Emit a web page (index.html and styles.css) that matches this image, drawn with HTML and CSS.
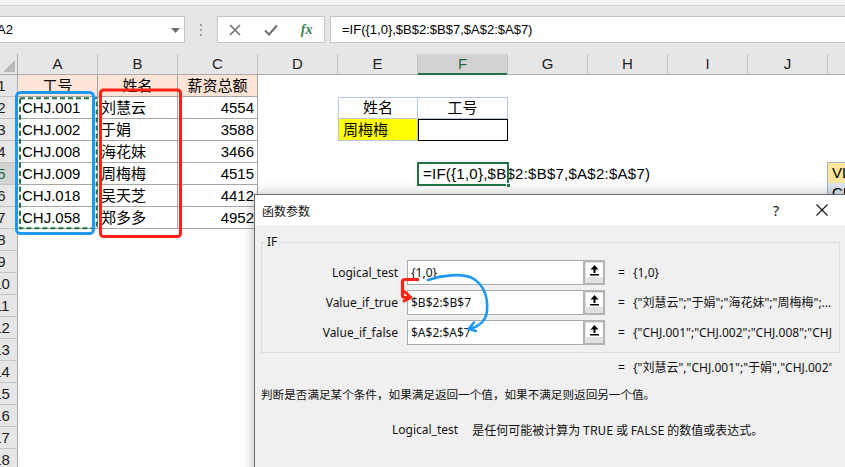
FILE: index.html
```html
<!DOCTYPE html>
<html lang="zh-CN">
<head>
<meta charset="utf-8">
<title>Excel IF</title>
<link rel="stylesheet" href="styles.css">
</head>
<body>
<div class="ribbon-edge"></div>
<div class="fbar">
  <div class="namebox"><span class="ref">A2</span><svg class="caret" width="9" height="5" viewBox="0 0 9 5"><path d="M0 0H9L4.5 5Z" fill="#707070"/></svg></div>
  <div class="grip"><i></i><i></i><i></i></div>
  <div class="fbtns">
    <span class="fb fb1"><svg width="12" height="12" viewBox="0 0 12 12"><path d="M1 1L11 11M11 1L1 11" stroke="#707070" stroke-width="1.6"/></svg></span>
    <span class="fb fb2"><svg width="14" height="12" viewBox="0 0 14 12"><path d="M1 6.5L5 10.5L13 1.5" stroke="#707070" stroke-width="2" fill="none"/></svg></span>
    <span class="fb fb3">fx</span>
  </div>
  <div class="finput">=IF({1,0},$B$2:$B$7,$A$2:$A$7)</div>
</div>

<div class="colheads">
  <div class="corner"><svg width="17" height="20" viewBox="0 0 17 20"><path d="M3 18H15V6Z" fill="#b9b9b9"/></svg></div>
  <div class="ch">A</div>
  <div class="ch">B</div>
  <div class="ch">C</div>
  <div class="ch">D</div>
  <div class="ch">E</div>
  <div class="ch w90 sel">F</div>
  <div class="ch">G</div>
  <div class="ch">H</div>
  <div class="ch">I</div>
  <div class="ch">J</div>
  <div class="ch rest"></div>
</div>

<div class="sheetbody">
  <div class="rowheads">
    <div class="rh"><span>1</span></div>
    <div class="rh"><span>2</span></div>
    <div class="rh"><span>3</span></div>
    <div class="rh"><span>4</span></div>
    <div class="rh sel"><span>5</span></div>
    <div class="rh"><span>6</span></div>
    <div class="rh"><span>7</span></div>
    <div class="rh"><span>8</span></div>
    <div class="rh"><span>9</span></div>
    <div class="rh"><span>10</span></div>
    <div class="rh"><span>11</span></div>
    <div class="rh"><span>12</span></div>
    <div class="rh"><span>13</span></div>
    <div class="rh"><span>14</span></div>
    <div class="rh"><span>15</span></div>
    <div class="rh"><span>16</span></div>
    <div class="rh"><span>17</span></div>
    <div class="rh"><span>18</span></div>
  </div>
  <div class="cells">
    <div class="row">
      <div class="c t hd">工号</div><div class="c t hd">姓名</div><div class="c t hd">薪资总额</div>
    </div>
    <div class="row">
      <div class="c t">CHJ.001</div><div class="c t cj">刘慧云</div><div class="c t num">4554</div>
      <div class="c"></div><div class="c lb lb-e2">姓名</div><div class="c w90 lb lb-f2">工号</div>
    </div>
    <div class="row">
      <div class="c t">CHJ.002</div><div class="c t cj">于娟</div><div class="c t num">3588</div>
      <div class="c"></div><div class="c lb-e3">周梅梅</div><div class="c w90 blk"></div>
    </div>
    <div class="row">
      <div class="c t">CHJ.008</div><div class="c t cj">海花妹</div><div class="c t num">3466</div>
    </div>
    <div class="row">
      <div class="c t">CHJ.009</div><div class="c t cj">周梅梅</div><div class="c t num">4515</div>
      <div class="c"></div><div class="c"></div>
      <div class="c w90 active">=IF({1,0},$B$2:$B$7,$A$2:$A$7)<i class="handle"></i></div>
    </div>
    <div class="row">
      <div class="c t">CHJ.018</div><div class="c t cj">吴天芝</div><div class="c t num">4412</div>
    </div>
    <div class="row">
      <div class="c t">CHJ.058</div><div class="c t cj">郑多多</div><div class="c t num">4952</div>
    </div>
  </div>
</div>

<div class="ac">
  <div class="ac-on">VLOOKUP</div>
  <div class="ac-next">CHOOSE</div>
</div>

<div class="dlg">
  <div class="dlg-title">
    <span class="dlg-name">函数参数</span>
    <span class="tb tb-help">?</span>
    <span class="tb tb-close"><svg width="12" height="12" viewBox="0 0 12 12"><path d="M0.5 0.5L11.5 11.5M11.5 0.5L0.5 11.5" stroke="#111" stroke-width="1.1"/></svg></span>
  </div>
  <div class="dlg-body">
    <fieldset class="grp">
      <legend>IF</legend>
      <div class="prow">
        <span class="plabel">Logical_test</span>
        <span class="pinput">{1,0}</span>
        <span class="pbtn"><svg width="17" height="14" viewBox="0 0 17 14"><rect width="17" height="14" fill="#fff"/><path d="M8.5 2L4.5 6.5H7.5V10H9.5V6.5H12.5Z" fill="#000"/><rect x="4" y="11" width="9" height="1.5" fill="#000"/></svg></span>
        <span class="peq">=</span>
        <span class="pval">{1,0}</span>
      </div>
      <div class="prow">
        <span class="plabel">Value_if_true</span>
        <span class="pinput">$B$2:$B$7</span>
        <span class="pbtn"><svg width="17" height="14" viewBox="0 0 17 14"><rect width="17" height="14" fill="#fff"/><path d="M8.5 2L4.5 6.5H7.5V10H9.5V6.5H12.5Z" fill="#000"/><rect x="4" y="11" width="9" height="1.5" fill="#000"/></svg></span>
        <span class="peq">=</span>
        <span class="pval">{"刘慧云";"于娟";"海花妹";"周梅梅";...</span>
      </div>
      <div class="prow">
        <span class="plabel">Value_if_false</span>
        <span class="pinput">$A$2:$A$7</span>
        <span class="pbtn"><svg width="17" height="14" viewBox="0 0 17 14"><rect width="17" height="14" fill="#fff"/><path d="M8.5 2L4.5 6.5H7.5V10H9.5V6.5H12.5Z" fill="#000"/><rect x="4" y="11" width="9" height="1.5" fill="#000"/></svg></span>
        <span class="peq">=</span>
        <span class="pval">{"CHJ.001";"CHJ.002";"CHJ.008";"CHJ.009";"CHJ.018";"CHJ.058"}</span>
      </div>
    </fieldset>
    <div class="res"><span class="peq">=</span><span class="pval">{"刘慧云","CHJ.001";"于娟","CHJ.002";"海花妹","CHJ.008"}</span></div>
    <div class="desc">判断是否满足某个条件，如果满足返回一个值，如果不满足则返回另一个值。</div>
    <div class="hint"><span class="hint-name">Logical_test</span><span>是任何可能被计算为 TRUE 或 FALSE 的数值或表达式。</span></div>
  </div>
</div>

<svg class="marks" width="845" height="467" viewBox="0 0 845 467">
  <rect x="20" y="98.3" width="76.7" height="130" fill="none" stroke="#217346" stroke-width="2" stroke-dasharray="5 3"/>
  <rect x="16.5" y="92.5" width="77" height="141" rx="4" fill="none" stroke="#1e98f2" stroke-width="3"/>
  <rect x="100.5" y="90" width="80" height="146.5" rx="3" fill="none" stroke="#ff2316" stroke-width="3"/>
  <path d="M419 279.5H405Q402.5 279.5 402.5 282V295.5Q402.5 297.5 405 297.5H410" fill="none" stroke="#ff2316" stroke-width="3.2" stroke-linejoin="round"/>
  <path d="M404.5 291.5L411 297.5L404 301" fill="none" stroke="#ff2316" stroke-width="3" stroke-linejoin="round" stroke-linecap="round"/>
  <path d="M428 280C440 276 462 272 474 279C484 286 488 298 487 311C486 321 480 326 469 329" fill="none" stroke="#1e98f2" stroke-width="2.6" stroke-linecap="round"/>
  <path d="M474 322.5L468.5 329L476 331" fill="none" stroke="#1e98f2" stroke-width="2.6" stroke-linecap="round" stroke-linejoin="round"/>
</svg>
</body>
</html>
```
FILE: styles.css
```css
* { box-sizing: border-box; }
html, body { margin: 0; padding: 0; }
body {
  width: 845px;
  height: 467px;
  overflow: hidden;
  position: relative;
  background: #fff;
  color: #000;
  font-family: "Liberation Sans", "Noto Sans CJK SC", sans-serif;
}

/* ribbon bottom edge */
.ribbon-edge {
  height: 6px;
  background: #f3f3f3;
  border-bottom: 1px solid #d4d4d4;
}

/* formula bar */
.fbar {
  height: 48px;
  background: #e6e6e6;
  display: flex;
  align-items: flex-start;
  padding-top: 10px;
}
.namebox {
  width: 185px;
  height: 27px;
  flex: none;
  background: #fff;
  border: 1px solid #c6c6c6;
  border-left: none;
  display: flex;
  align-items: center;
  justify-content: space-between;
  padding-right: 4px;
  font-size: 13px;
}
.namebox .ref { margin-left: -3px; }
.caret { margin-top: 1px; }
.grip {
  width: 32px;
  height: 27px;
  flex: none;
  display: flex;
  flex-direction: column;
  align-items: center;
  justify-content: center;
  gap: 3px;
}
.grip i { display: block; width: 2px; height: 2px; background: #9e9e9e; }
.fbtns {
  width: 108px;
  height: 27px;
  flex: none;
  background: #fff;
  border: 1px solid #c6c6c6;
  display: flex;
  align-items: center;
}
.fb { display: flex; justify-content: center; align-items: center; height: 25px; }
.fb1 { width: 35px; }
.fb2 { width: 37px; }
.fb3 {
  width: 35px;
  font-family: "Liberation Serif", serif;
  font-style: italic;
  font-weight: bold;
  font-size: 14px;
  color: #3d7f55;
}
.finput {
  flex: 1;
  height: 27px;
  margin-left: 5px;
  background: #fff;
  border: 1px solid #c6c6c6;
  border-right: none;
  padding-left: 11px;
  font-size: 13px;
  line-height: 25px;
  white-space: nowrap;
}

/* column headers */
.colheads {
  display: flex;
  height: 21px;
  background: #e6e6e6;
  border-bottom: 1px solid #ababab;
}
.corner {
  width: 18px;
  flex: none;
  border-right: 1px solid #ababab;
}
.corner svg { display: block; }
.ch {
  width: 80px;
  flex: none;
  border-right: 1px solid #c4c4c4;
  text-align: center;
  font-size: 15px;
  line-height: 20px;
  color: #222;
}
.ch.w90 { width: 90px; }
.ch.sel {
  background: #d2d2d2;
  color: #1e6b41;
  box-shadow: inset 0 -2px 0 #217346;
  height: 21px;
}
.ch.rest { flex: 1; border-right: none; }

/* body */
.sheetbody { display: flex; }
.rowheads {
  width: 18px;
  flex: none;
  display: flex;
  flex-direction: column;
  background: #e6e6e6;
}
.rh {
  height: 22px;
  border-right: 1px solid #ababab;
  border-bottom: 1px solid #c4c4c4;
  overflow: hidden;
  display: flex;
  font-size: 15px;
  line-height: 21px;
  color: #222;
}
.rh span {
  flex: none;
  width: 33px;
  margin-left: -15px;
  text-align: center;
}
.rh.sel {
  background: #d2d2d2;
  color: #1e6b41;
  box-shadow: inset -2px 0 0 #217346;
}

.cells { flex: 1; }
.row { display: flex; height: 22px; }
.c {
  width: 80px;
  height: 22px;
  flex: none;
  padding: 0 4px;
  font-size: 15px;
  line-height: 22px;
  white-space: nowrap;
}
.c.w90 { width: 90px; }
.c.t {
  border-right: 1px solid #a6a6a6;
  border-bottom: 1px solid #a6a6a6;
  line-height: 21px;
}
.c.cj { padding-left: 3px; }
.hd { background: #fce4d6; text-align: center; }
.num { text-align: right; padding-right: 3px; }

.lb { text-align: center; border: 1px solid #b4c6e7; line-height: 20px; }
.lb-f2 { border-left: none; }
.lb-e3 {
  background: #ffff00;
  border: 1px solid #b4c6e7;
  border-top: none;
  line-height: 21px;
}
.blk { border: 1px solid #000; height: 22px; }

.active {
  position: relative;
  z-index: 1;
  padding-left: 5px;
  letter-spacing: 0.25px;
  outline: 2px solid #217346;
  outline-offset: -1px;
}
.handle {
  position: absolute;
  right: -3px;
  bottom: -3px;
  width: 5px;
  height: 5px;
  background: #217346;
  border: 1px solid #fff;
}

/* autocomplete list */
.ac {
  position: absolute;
  left: 827px;
  top: 162px;
  width: 130px;
  border: 1px solid #a3b3cf;
  background: #fff;
  z-index: 2;
}
.ac div {
  height: 20px;
  line-height: 20px;
  padding-left: 4px;
  font-size: 15px;
  white-space: nowrap;
}
.ac-on { background: #fde59b; }
.ac-next { background: #dde6f1; }

/* dialog */
.dlg {
  position: absolute;
  left: 254px;
  top: 194px;
  width: 593px;
  height: 290px;
  background: #f0f0f0;
  border: 1px solid #6e6e6e;
  box-shadow: 0 0 12px rgba(0, 0, 0, 0.28);
  z-index: 3;
  font-family: "Noto Sans", "Noto Sans CJK SC", sans-serif;
  font-size: 12px;
  color: #111;
}
.dlg-title {
  height: 30px;
  background: #fff;
  display: flex;
  align-items: center;
  padding-left: 7px;
  font-family: "Noto Sans CJK SC", sans-serif;
}
.dlg-name { flex: 1; }
.tb {
  width: 46px;
  height: 30px;
  display: flex;
  justify-content: center;
  align-items: center;
}
.tb-help { font-family: "Noto Sans", sans-serif; font-size: 14px; }
.tb-close { margin-right: 1px; }

.dlg-body { padding: 0 6px; }
.grp {
  margin: 9px 0 0;
  padding: 10px 0 7px;
  min-inline-size: 0;
  border: 1px solid #dcdcdc;
  border-radius: 0;
}
.grp legend {
  margin-left: 3px;
  padding: 0 2px;
  line-height: 16px;
  font-size: 12px;
}
.prow {
  display: flex;
  height: 25px;
  margin-bottom: 5px;
  align-items: stretch;
}
.prow:last-child { margin-bottom: 0; }
.plabel {
  width: 136px;
  margin-right: 9px;
  text-align: right;
  line-height: 25px;
  white-space: nowrap;
}
.pinput {
  width: 176px;
  flex: none;
  background: #fff;
  border: 1px solid #a9a9a9;
  border-right: none;
  padding-left: 3px;
  line-height: 23px;
  white-space: nowrap;
  overflow: hidden;
}
.pbtn {
  width: 22px;
  flex: none;
  background: #e1e1e1;
  border: 2px solid #b3b3b3;
  display: flex;
  justify-content: center;
  align-items: flex-start;
  padding-top: 1px;
}
.pbtn svg { display: block; }
.peq {
  width: 7px;
  margin-left: 13px;
  flex: none;
  line-height: 25px;
}
.pval {
  flex: 1;
  margin-left: 8px;
  margin-right: 7px;
  line-height: 25px;
  white-space: nowrap;
  overflow: hidden;
  font-family: "Noto Sans", "Noto Sans CJK SC", sans-serif;
}
.res {
  display: flex;
  height: 16px;
  margin-top: 7px;
  padding-left: 344px;
}
.res .peq, .res .pval { line-height: 16px; }
.res .pval { margin-right: 8px; }
.desc {
  margin-top: 10px;
  line-height: 16px;
  font-size: 11.6px;
  white-space: nowrap;
  font-family: "Noto Sans CJK SC", sans-serif;
}
.hint {
  margin-top: 20px;
  line-height: 16px;
  padding-left: 131px;
  display: flex;
  gap: 14px;
  white-space: nowrap;
}
.hint span:last-child { font-family: "Noto Sans CJK SC", "Noto Sans", sans-serif; }

/* annotation overlay */
.marks {
  position: absolute;
  left: 0;
  top: 0;
  z-index: 5;
  pointer-events: none;
}
```
